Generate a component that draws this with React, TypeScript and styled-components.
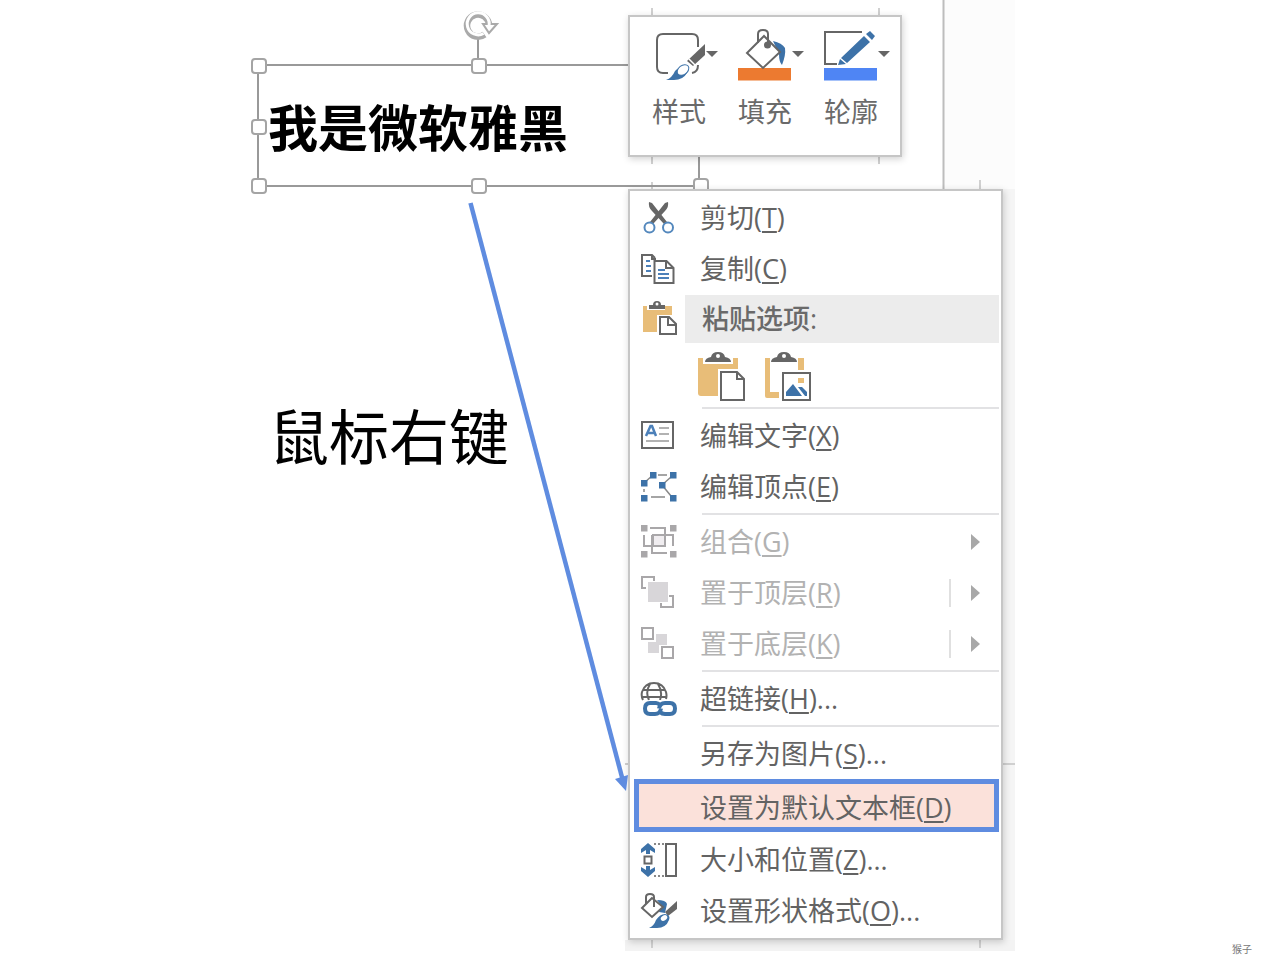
import React from 'react';
import styled, { createGlobalStyle, css } from 'styled-components';

const GlobalStyle = createGlobalStyle`
  *, *::before, *::after { box-sizing: border-box; }
  body {
    margin: 0;
    background: #fff;
    color: #000;
    font-family: "Open Sans", "Noto Sans CJK SC", sans-serif;
  }
  button { font: inherit; color: inherit; }
`;

const INK = '#666';
const BLUE = '#3d72a8';
const TAN = '#e8bd78';
const MUTED = '#a9a7a9';

const Page = styled.div`
  min-height: 100vh;
  display: flex;
  flex-direction: column;
  overflow-x: hidden;
`;

const Scene = styled.main`
  position: relative;
  width: 100%;
  max-width: 764px;
  margin: 0 auto;
  display: grid;
  grid-template-columns: 370px 375px;
`;

const Overlay = styled.svg<{ $front?: boolean }>`
  position: absolute;
  top: 0;
  left: 0;
  overflow: visible;
  pointer-events: none;
  z-index: ${p => (p.$front ? 3 : 0)};
`;

const SlideColumn = styled.section`
  position: relative;
  padding-top: 64px;
`;

const TextBox = styled.div`
  position: relative;
  width: 443px;
  height: 123px;
  margin-left: -1px;
  padding: 4px 0 0 9px;
  border: 2px solid #999;
  display: flex;
  align-items: center;
`;

const BoxText = styled.h1`
  margin: 0;
  font-size: 50px;
  line-height: 60px;
  font-weight: 700;
  white-space: nowrap;
`;

const Handle = styled.span<{ $x: string; $y: string }>`
  position: absolute;
  left: ${p => p.$x};
  top: ${p => p.$y};
  width: 16px;
  height: 16px;
  margin: -8px 0 0 -8px;
  border: 2px solid #a4a4a4;
  border-radius: 4px;
  background: #fff;
`;

const Rotate = styled.svg`
  position: absolute;
  left: 204px;
  top: -56px;
`;

const Caption = styled.p`
  margin: 205px 0 0 11px;
  font-size: 60px;
  line-height: 90px;
`;

const PopupColumn = styled.div`
  position: relative;
  z-index: 1;
  padding-top: 15px;
  display: flex;
  flex-direction: column;
  align-items: flex-start;
  gap: 32px;
`;

const panel = css`
  background: #fff;
  border: 2px solid #c6c6c6;
  box-shadow: 1px 2px 7px rgba(0, 0, 0, 0.18);
`;

const Toolbar = styled.div`
  ${panel}
  height: 142px;
  padding: 11px 10px 0 22px;
  display: flex;
  gap: 20px;
  align-items: flex-start;
`;

const Tool = styled.button`
  width: 66px;
  padding: 0;
  border: 0;
  background: none;
  display: flex;
  flex-direction: column;
  align-items: flex-start;
  gap: 11px;
  font-size: 27px;
  line-height: 38px;
  color: #6a6a6a;
  svg { display: block; }
`;

const Menu = styled.ul`
  ${panel}
  width: 100%;
  margin: 0;
  padding: 1px 0 2px;
  list-style: none;
`;

const Item = styled.button<{ $marked?: boolean }>`
  width: 100%;
  height: 51px;
  padding: 0 21px 0 10px;
  border: 0;
  background: none;
  display: grid;
  grid-template-columns: 38px 1fr auto;
  column-gap: 22px;
  align-items: center;
  text-align: left;
  font-size: 27px;
  line-height: 38px;
  white-space: nowrap;
  color: #636363;
  &:disabled { color: #b2b2b2; }
  u {
    text-decoration-thickness: 2px;
    text-underline-offset: 3px;
  }
  ${p =>
    p.$marked &&
    css`
      width: auto;
      min-width: 365px;
      height: 53px;
      margin: 0 2px 2px 4px;
      padding: 4px 0 0 1px;
      border: 5px solid #5f8ce0;
      background: #fbe1da;
    `}
`;

const Divider = styled.li`
  height: 2px;
  margin: 1px 2px 1px 72px;
  background: #e2e2e4;
`;

const Heading = styled.li`
  height: 48px;
  margin: 1px 2px 3px 0;
  padding-left: 10px;
  display: grid;
  grid-template-columns: 45px 1fr;
  align-items: center;
  h2 {
    margin: 0;
    padding-left: 17px;
    background: #ececec;
    font-size: 27px;
    line-height: 48px;
    font-weight: 500;
    color: #6a6a6a;
  }
`;

const PasteRow = styled.li`
  height: 60px;
  padding: 6px 0 0 68px;
  display: flex;
  gap: 18px;
`;

const PasteButton = styled.button`
  width: 48px;
  height: 50px;
  padding: 0;
  border: 0;
  background: none;
  svg { display: block; }
`;

const Submenu = styled.span<{ $split?: boolean }>`
  width: 31px;
  height: 28px;
  border-left: 2px solid ${p => (p.$split ? '#e0e0e0' : 'transparent')};
  display: flex;
  align-items: center;
  justify-content: flex-end;
`;

const Footer = styled.footer`
  margin-top: auto;
  padding: 0 28px 4px 0;
  text-align: right;
  font-size: 10px;
  line-height: 14px;
  color: #777;
`;

const Icon = ({ children }: { children?: React.ReactNode }) => (
  <svg width="38" height="38" viewBox="0 0 38 38" fill="none" stroke={INK} strokeWidth="2" aria-hidden="true">
    {children}
  </svg>
);

const dots = (points: number[][], fill: string) =>
  points.map(([x, y]) => <rect key={`${x}-${y}`} x={x - 3} y={y - 3} width="6.5" height="6.5" fill={fill} stroke="none" />);

const CutIcon = () => (
  <Icon>
    <path d="M9 3q-1 5 3 9l12 13 3-2L12 4z" fill={INK} stroke="none" />
    <path d="M28 3q1 5-3 9L13 25l-3-2L25 4z" fill={INK} stroke="none" />
    <circle cx="9.500" cy="28.500" r="5" stroke="#5488bd" fill="#fff" />
    <circle cx="28" cy="28.500" r="5" stroke="#5488bd" fill="#fff" />
  </Icon>
);

const CopyIcon = () => (
  <Icon>
    <path d="M12 26H2V5h10l3 3M12 5v4h4" />
    <path d="M14.500 11h12l7 7v15h-19z" fill="#fff" />
    <path d="M26 11v7h7" />
    <path d="M6 11h4M6 16h5M6 21h5M18 20h7M18 24h11M18 28h11" stroke="#4c80b9" />
  </Icon>
);

const PasteIcon = () => (
  <Icon>
    <path d="M3 6h4v4h18V6h7v9H17v17H3z" fill={TAN} stroke="none" />
    <path d="M9 9V5h4q0-4 4-4t4 4h4v4z" fill={INK} stroke="none" />
    <circle cx="17" cy="4" r="1.500" fill="#fff" stroke="none" />
    <path d="M20 17h9l7 7v10H20z" fill="#fff" />
    <path d="M28 17v8h8" />
  </Icon>
);

const EditTextIcon = () => (
  <Icon>
    <rect x="2" y="5" width="31" height="26" />
    <path d="M6 19l4.500-10h1.500l4 10M8 16h7" stroke="#4c80b9" strokeWidth="2.500" />
    <path d="M19 11h10M19 17h10M6 24h23" stroke="#999" strokeWidth="1.500" />
  </Icon>
);

const EditPointsIcon = () => (
  <Icon>
    <path d="M18 7h9M4 15l9-8M31 9l-9 8M22 17l9 11M4 21v3M11 29h14" stroke="#888" strokeWidth="1.500" />
    {dots([[13, 7], [33, 7], [4, 15], [22, 17], [4, 30], [33, 30]], BLUE)}
  </Icon>
);

const GroupIcon = () => (
  <Icon>
    <g stroke={MUTED}>
      <path d="M10 5h15v18H4V12M12 12h21v11M12 12v18h15" />
      <path d="M13 12v11h12V12z" fill="#f0edf0" />
    </g>
    {dots([[4, 5], [33, 5], [4, 31], [33, 31]], MUTED)}
  </Icon>
);

const FrontIcon = () => (
  <Icon>
    <rect x="8" y="8" width="20" height="20" fill="#d8d6d9" stroke="none" />
    <path d="M6 14H2V3h12v4M21 29v4h12V22h-4" stroke={MUTED} />
  </Icon>
);

const BackIcon = () => (
  <Icon>
    <g fill="#d8d6d9" stroke="none">
      <rect x="16" y="9" width="11" height="11" />
      <rect x="8" y="17" width="11" height="11" />
    </g>
    <rect x="2" y="3" width="11" height="11" stroke={MUTED} fill="#fff" />
    <rect x="22" y="22" width="11" height="11" stroke={MUTED} fill="#fff" />
  </Icon>
);

const LinkIcon = () => (
  <Icon>
    <path d="M3 20q-2-4-1-8Q5 3 14 3t12 9q1 4 0 7M10 4Q5 12 9 20M18 4q5 8 2 16M3 10h22M2 17h24" />
    <rect x="3" y="20" width="34" height="17" rx="8" fill="#fff" stroke="none" />
    <path d="M20 25q-2-2-4-2H10q-5 0-5 5.500t5 5.500h5q5 0 6-5.500" stroke={BLUE} strokeWidth="4" />
    <path d="M20 32q2 2 5 2h5q5 0 5-5.500t-5-5.500h-5q-5 0-6 5.500" stroke={BLUE} strokeWidth="4" />
  </Icon>
);

const SizeIcon = () => (
  <Icon>
    <path d="M8 2l7 6v4l-5-3v4H6V9l-5 3V8zM8 36l7-6v-4l-5 3v-4H6v4l-5-3v4z" fill={BLUE} stroke="none" />
    <rect x="4.500" y="15.500" width="7" height="7" />
    <path d="M14 3h11M14 35h11" strokeDasharray="2 2" stroke="#888" />
    <rect x="26" y="3" width="10" height="32" />
  </Icon>
);

const FormatIcon = () => (
  <Icon>
    <path d="M17 8q9 0 10 4l-2 9-6-1 2-7z" fill={BLUE} stroke="none" />
    <path d="M12 6L2 16l10 9 11-10z" fill="#fff" />
    <path d="M6 12V5q0-3 4-3t4 3v10" />
    <path d="M37 9v8l-9 7-3-4z" fill={INK} stroke="none" />
    <path d="M9 36q5-2 7-8 4-6 9-6 6 1 4 6-3 8-12 8z" fill={BLUE} stroke="none" />
    <ellipse cx="24" cy="26" rx="3.500" ry="2.500" transform="rotate(-35 24 26)" fill="#fff" stroke="none" />
  </Icon>
);

const PasteKeepIcon = () => (
  <svg width="48" height="50" viewBox="0 0 48 50" fill="none" stroke={INK} strokeWidth="2" aria-hidden="true">
    <path d="M0 6h5v6h30V6h5v11H20v27H3q-3 0-3-3z" fill={TAN} stroke="none" />
    <path d="M7 10q0-4 6-5 1-5 7-5t7 5q6 1 6 5z" fill={INK} stroke="none" />
    <circle cx="20" cy="4" r="2" fill="#fff" stroke="none" />
    <path d="M23 20h16l7 7v21H23z" fill="#fff" />
    <path d="M39 20v7h7" />
  </svg>
);

const PastePictureIcon = () => (
  <svg width="48" height="50" viewBox="0 0 48 50" fill="none" stroke={INK} strokeWidth="2" aria-hidden="true">
    <path d="M1 6h5v34h9v6H3q-2 0-2-2zM35 6h5v12h-6V6z" fill={TAN} stroke="none" />
    <path d="M7 10q0-4 6-5 1-5 7-5t7 5q6 1 6 5z" fill={INK} stroke="none" />
    <circle cx="20" cy="4" r="2" fill="#fff" stroke="none" />
    <rect x="19" y="21" width="27" height="27" fill="#fff" />
    <rect x="34" y="26" width="6" height="5" fill={TAN} stroke="none" />
    <path d="M22 44v-4l7-8 9 12z" fill={BLUE} stroke="none" />
    <path d="M34 35h4l5 5v4h-2z" fill={BLUE} stroke="none" />
  </svg>
);

const ToolIcon = ({ children }: { children?: React.ReactNode }) => (
  <svg width="66" height="54" viewBox="0 0 66 54" fill="none" stroke={INK} strokeWidth="2" aria-hidden="true">
    {children}
    <path d="M54 23h12l-6 6z" fill={INK} stroke="none" />
  </svg>
);

const StyleIcon = () => (
  <ToolIcon>
    <path d="M16 45h-5q-6 0-6-6V12q0-6 6-6h29q6 0 6 6v7M46 37q0 7-6 8" />
    <path d="M53 16v11L41 38l-6-5z" fill={INK} stroke="none" />
    <path d="M37 31l6 6" stroke="#fff" strokeWidth="1.500" />
    <path d="M14 52q6-2 9-9 5-5 11-4 5 2 1 6-4 7-13 7z" fill={BLUE} stroke="none" />
    <ellipse cx="31" cy="42" rx="6.500" ry="4.500" transform="rotate(-38 31 42)" fill="#fff" stroke={BLUE} strokeWidth="1" />
  </ToolIcon>
);

const FillIcon = () => (
  <ToolIcon>
    <rect y="40" width="53" height="12.500" fill="#ec7a30" stroke="none" />
    <path d="M35 13q9 2 12 7 1 7-3 17-3-3-3-11z" fill={BLUE} stroke="none" />
    <path d="M26 8L9 25l16 15 17-16z" fill="#fff" />
    <path d="M20 15V6q0-4 5-4t5 4v11" />
    <circle cx="29.500" cy="17" r="3.500" fill={INK} stroke="none" />
  </ToolIcon>
);

const OutlineIcon = () => (
  <ToolIcon>
    <rect x="0" y="40" width="53" height="12.500" fill="#4f85f4" stroke="none" />
    <path d="M38 4H1v32H13" />
    <path d="M17 30L40 8l6 6-23 21zM42 6l4-3 5 5-3 4zM14 37l2-6 6 5z" fill={BLUE} stroke="none" />
  </ToolIcon>
);

type Entry = {
  label: string;
  accessKey: string;
  more?: boolean;
  icon?: React.ReactNode;
  disabled?: boolean;
  submenu?: 'plain' | 'split';
  marked?: boolean;
};

const clipboard: Entry[] = [
  { label: '剪切', accessKey: 'T', icon: <CutIcon /> },
  { label: '复制', accessKey: 'C', icon: <CopyIcon /> },
];

const groups: Entry[][] = [
  [
    { label: '编辑文字', accessKey: 'X', icon: <EditTextIcon /> },
    { label: '编辑顶点', accessKey: 'E', icon: <EditPointsIcon /> },
  ],
  [
    { label: '组合', accessKey: 'G', icon: <GroupIcon />, disabled: true, submenu: 'plain' },
    { label: '置于顶层', accessKey: 'R', icon: <FrontIcon />, disabled: true, submenu: 'split' },
    { label: '置于底层', accessKey: 'K', icon: <BackIcon />, disabled: true, submenu: 'split' },
  ],
  [{ label: '超链接', accessKey: 'H', more: true, icon: <LinkIcon /> }],
  [
    { label: '另存为图片', accessKey: 'S', more: true },
    { label: '设置为默认文本框', accessKey: 'D', marked: true },
    { label: '大小和位置', accessKey: 'Z', more: true, icon: <SizeIcon /> },
    { label: '设置形状格式', accessKey: 'O', more: true, icon: <FormatIcon /> },
  ],
];

const MenuEntry = ({ entry }: { entry: Entry }) => (
  <li>
    <Item type="button" disabled={entry.disabled} $marked={entry.marked}>
      {entry.icon ?? <Icon />}
      <span>
        {entry.label}(<u>{entry.accessKey}</u>){entry.more && '...'}
      </span>
      {entry.submenu && (
        <Submenu $split={entry.submenu === 'split'}>
          <svg width="9" height="16" viewBox="0 0 9 16" aria-hidden="true">
            <path d="M0 0l9 8-9 8z" fill="#a8a8a8" />
          </svg>
        </Submenu>
      )}
    </Item>
  </li>
);

const handles: [string, string][] = [
  ['0px', '0px'], ['220px', '0px'],
  ['0px', '61px'],
  ['0px', '120px'], ['220px', '120px'], ['442px', '120px'],
];

export default function App() {
  return (
    <>
      <GlobalStyle />
      <Page>
        <Scene>
          <Overlay width="764" height="951" aria-hidden="true">
            <rect x="686" y="0" width="71" height="951" fill="#fcfcfc" />
            <rect x="745" y="189" width="12" height="762" fill="#f5f5f5" />
            <rect x="367" y="940" width="390" height="11" fill="#f3f3f3" />
            <path d="M685.500 0V189" stroke="#bdbdbd" strokeWidth="2" />
            <path d="M394 8v8M621 8v8M394 156v8M621 156v8M394 182v8M722 180v10M394 940v8M722 940v8M367 764h4M745 764h12" stroke="#d0d0d0" strokeWidth="2" />
          </Overlay>

          <SlideColumn>
            <TextBox>
              <BoxText>我是微软雅黑</BoxText>
              <Rotate width="40" height="56" viewBox="0 0 40 56" fill="none" aria-hidden="true">
                <path d="M15 28v28" stroke="#999" strokeWidth="2" />
                <path d="M21.500 24.500A11 11 0 1 1 26 15" stroke="#aaa" strokeWidth="6.500" />
                <path d="M20 14h14l-8 9z" fill="#fff" stroke="#aaa" strokeWidth="2" />
                <path d="M20.500 23.500A11 11 0 1 1 26 16" stroke="#fff" strokeWidth="3" />
              </Rotate>
              {handles.map(([x, y]) => (
                <Handle key={x + y} $x={x} $y={y} />
              ))}
            </TextBox>
            <Caption>鼠标右键</Caption>
          </SlideColumn>

          <PopupColumn>
            <Toolbar role="toolbar">
              <Tool type="button"><StyleIcon />样式</Tool>
              <Tool type="button"><FillIcon />填充</Tool>
              <Tool type="button"><OutlineIcon />轮廓</Tool>
            </Toolbar>

            <Menu>
              {clipboard.map(entry => <MenuEntry key={entry.label} entry={entry} />)}
              <Heading>
                <PasteIcon />
                <h2>粘贴选项:</h2>
              </Heading>
              <PasteRow>
                <PasteButton type="button"><PasteKeepIcon /></PasteButton>
                <PasteButton type="button"><PastePictureIcon /></PasteButton>
              </PasteRow>
              {groups.map((group, i) => (
                <React.Fragment key={i}>
                  <Divider role="separator" />
                  {group.map(entry => <MenuEntry key={entry.label} entry={entry} />)}
                </React.Fragment>
              ))}
            </Menu>
          </PopupColumn>

          <Overlay $front width="764" height="940" aria-hidden="true">
            <path d="M212.500 203L365 781" stroke="#5f8ce0" strokeWidth="4.500" />
            <path d="M357 779l13-4-2 16z" fill="#5f8ce0" />
          </Overlay>
        </Scene>
        <Footer>猴子</Footer>
      </Page>
    </>
  );
}
